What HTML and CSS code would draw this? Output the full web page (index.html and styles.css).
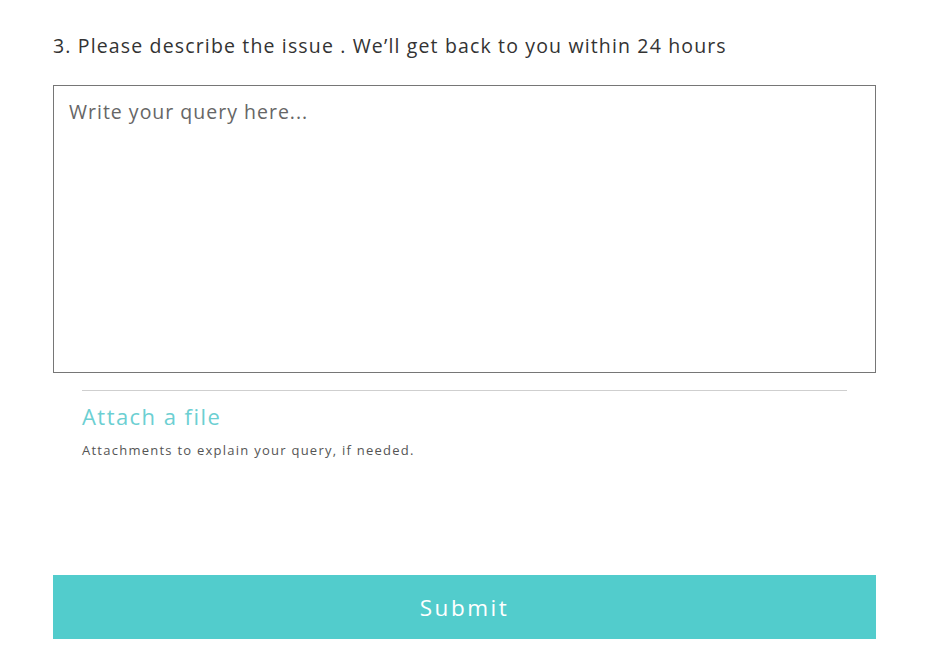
FILE: index.html
```html
<!DOCTYPE html>
<html lang="en">
<head>
    <meta charset="UTF-8">
    <meta name="viewport" content="width=device-width, initial-scale=1.0">
    <title>Support Query</title>
    <link rel="stylesheet" href="styles.css">
</head>
<body>
    <main class="query-form">
        <h2 class="question">3. Please describe the issue . We’ll get back to you within 24 hours</h2>
        <textarea class="query-input" placeholder="Write your query here..."></textarea>

        <div class="attach">
            <a href="#" class="attach-link">Attach a file</a>
            <p class="attach-hint">Attachments to explain your query, if needed.</p>
        </div>

        <button type="submit" class="submit-btn">Submit</button>
    </main>
</body>
</html>
```

FILE: styles.css
```css
:root {
    --text-color: #333;
    --muted-color: #555;
    --accent-color: #52cccc;
    --attach-color: #6ccfd2;
    --border-color: #767676;
}

body {
    margin: 0;
    padding: 0;
    background-color: #fff;
    font-family: 'Open Sans', sans-serif;
    color: var(--text-color);
}

.query-form {
    width: 823px;
    margin-left: 53px;
    padding-top: 33px;
    display: flex;
    flex-direction: column;
}

.question {
    margin: 0;
    font-size: 19.5px;
    font-weight: 400;
    line-height: 26px;
    letter-spacing: 1.15px;
    color: var(--text-color);
}

.query-input {
    margin-top: 26px;
    height: 288px;
    box-sizing: border-box;
    border: 1px solid var(--border-color);
    padding: 12px 15px;
    font-family: inherit;
    font-size: 19.5px;
    letter-spacing: 1px;
    resize: none;
    outline: none;
}

.query-input::placeholder {
    color: #666;
}

.attach {
    margin: 17px 29px 0;
    border-top: 1px solid #cfcfcf;
    padding-top: 10px;
    display: flex;
    flex-direction: column;
}

.attach-link {
    font-size: 22px;
    line-height: 30px;
    color: var(--attach-color);
    text-decoration: none;
    letter-spacing: 1.45px;
}

.attach-hint {
    margin: 10px 0 0;
    font-size: 13px;
    letter-spacing: 1.25px;
    color: var(--muted-color);
}

.submit-btn {
    margin-top: 116px;
    height: 64px;
    border: none;
    background-color: var(--accent-color);
    color: #fff;
    font-family: inherit;
    font-size: 22.5px;
    letter-spacing: 2.5px;
    cursor: pointer;
}
```
